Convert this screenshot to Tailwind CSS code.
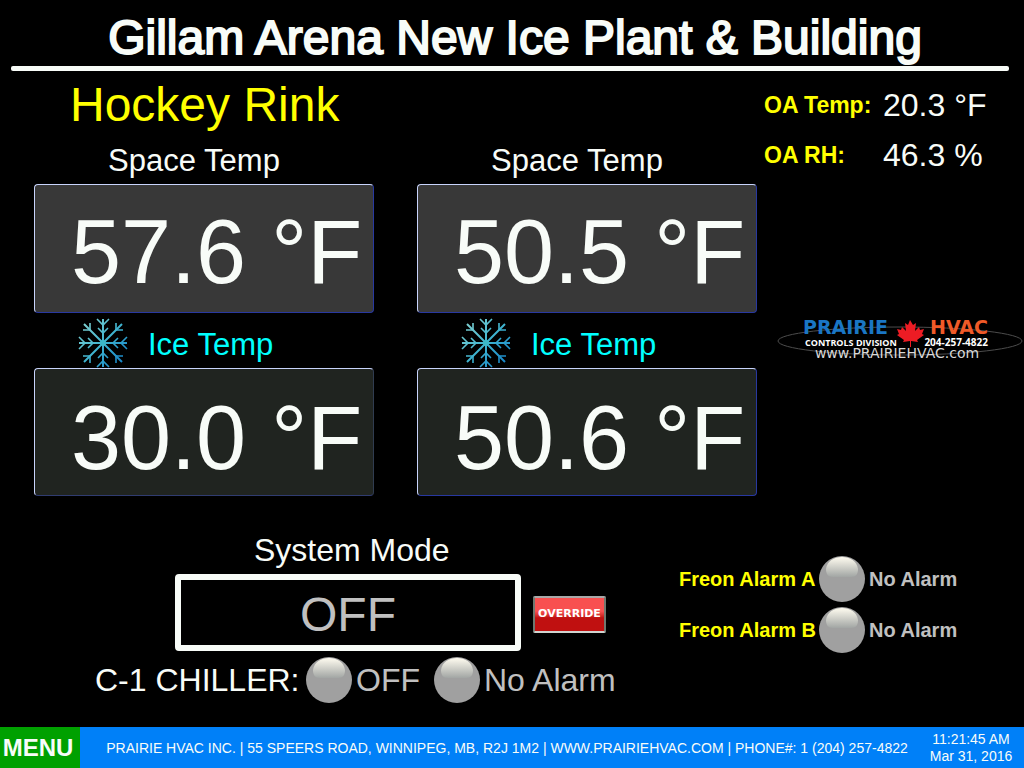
<!DOCTYPE html>
<html lang="en">
<head>
<meta charset="utf-8">
<meta name="viewport" content="width=device-width, initial-scale=1">
<title>Gillam Arena New Ice Plant &amp; Building</title>
<script src="https://cdn.jsdelivr.net/npm/@tailwindcss/browser@4"></script>
</head>
<body class="flex min-h-screen flex-col bg-black font-['Liberation_Sans',Arial,sans-serif] text-[#f8fcf8]">

<!-- Shared drawings -->
<svg class="absolute size-0" aria-hidden="true">
  <defs>
    <linearGradient id="frost" gradientUnits="userSpaceOnUse" x1="-20" y1="-20" x2="20" y2="20">
      <stop offset="0" stop-color="#7fd0d0"/><stop offset=".5" stop-color="#3fb4d0"/><stop offset="1" stop-color="#1583c8"/>
    </linearGradient>
    <linearGradient id="gloss" x1="0" y1="0" x2="0" y2="1">
      <stop offset="0" stop-color="#fffcf0"/><stop offset="1" stop-color="#a2a6a4"/>
    </linearGradient>
  </defs>
  <symbol id="snowflake" viewBox="-25 -25 50 50">
    <g fill="none" stroke="url(#frost)" stroke-width="1.6">
      <path d="M0 -24V24M-24 0H24M-19 -19L19 19M19 -19L-19 19" stroke-width="2"/>
      <path d="M-6 -24L0 -18L6 -24M-5 -15L0 -10L5 -15M-6 24L0 18L6 24M-5 15L0 10L5 15"/>
      <path d="M-24 -6L-18 0L-24 6M-15 -5L-10 0L-15 5M24 -6L18 0L24 6M15 -5L10 0L15 5"/>
      <path d="M-20 -13H-13V-20M20 -13H13V-20M-20 13H-13V20M20 13H13V20"/>
    </g>
    <circle r="3" fill="#3db8c8"/>
  </symbol>
  <symbol id="lamp" viewBox="0 0 46 46">
    <circle cx="23" cy="23" r="23" fill="#a0a0a0"/>
    <path d="M7 13C8 5 15 1 23 1S38 5 39 13C39 18 37 21 32 21H14C9 21 7 18 7 13Z" fill="url(#gloss)"/>
  </symbol>
</svg>

<header class="pt-[10px] pr-[15px] pl-[11px]">
  <h1 class="pl-[10px] text-center text-[48px] leading-[56px] [-webkit-text-stroke:2px_#f8fcf8]">Gillam Arena New Ice Plant &amp; Building</h1>
  <div class="h-[5px] rounded-xs bg-[#f8fcf8]"></div>
</header>

<main class="flex-1 pt-[6px]">
  <div class="grid grid-cols-[757fr_267fr]">
    <section class="pl-[34px]">
      <h2 class="pl-[36px] text-[48px] leading-[56px] text-[#ffff00]">Hockey Rink</h2>
      <div class="mt-2 grid grid-cols-2 gap-[43px]">
        <div>
          <h3 class="h-[43px] pr-5 text-center text-[31px] leading-10">Space Temp</h3>
          <div class="h-[129px] rounded-[4px] border border-t-[#c8d4fc] border-r-[#2838a0] border-b-[#2838a0] border-l-[#c8d4fc] bg-[#383838] pt-1 pl-[36px] text-[90px] leading-[126px] whitespace-nowrap">57.6 °F</div>
          <div class="flex h-[55px] items-end pl-[44px] text-[#00ffff]">
            <svg class="size-[50px]" aria-hidden="true"><use href="#snowflake"/></svg>
            <h3 class="pl-5 text-[31px] leading-[46px]">Ice Temp</h3>
          </div>
          <div class="h-[128px] rounded-[4px] border border-t-[#c8d4fc] border-r-[#303c50] border-b-[#303c70] border-l-[#c8d4fc] bg-[#202420] pt-1.5 pl-[36px] text-[90px] leading-[126px] whitespace-nowrap">30.0 °F</div>
        </div>
        <div>
          <h3 class="h-[43px] pr-5 text-center text-[31px] leading-10">Space Temp</h3>
          <div class="h-[129px] rounded-[4px] border border-t-[#c8d4fc] border-r-[#2838a0] border-b-[#2838a0] border-l-[#c8d4fc] bg-[#383838] pt-1 pl-[36px] text-[90px] leading-[126px] whitespace-nowrap">50.5 °F</div>
          <div class="flex h-[55px] items-end pl-[44px] text-[#00ffff]">
            <svg class="size-[50px]" aria-hidden="true"><use href="#snowflake"/></svg>
            <h3 class="pl-5 text-[31px] leading-[46px]">Ice Temp</h3>
          </div>
          <div class="h-[128px] rounded-[4px] border border-t-[#c8d4fc] border-r-[#2838a0] border-b-[#2838a0] border-l-[#c8d4fc] bg-[#202420] pt-1.5 pl-[36px] text-[90px] leading-[126px] whitespace-nowrap">50.6 °F</div>
        </div>
      </div>
    </section>

    <aside>
      <dl class="grid grid-cols-[119px_1fr] gap-y-[10px] pt-2 pl-[7px] text-[32px] leading-10 whitespace-nowrap">
        <dt class="text-[23px] font-bold text-[#ffff00]">OA Temp:</dt><dd>20.3 °F</dd>
        <dt class="text-[23px] font-bold text-[#ffff00]">OA RH:</dt><dd>46.3 %</dd>
      </dl>
      <svg class="mt-[140px] ml-5 h-[50px] w-[246px]" viewBox="777 315 246 50" role="img" aria-label="Prairie HVAC Controls Division">
        <ellipse cx="900" cy="341" rx="122" ry="14" fill="none" stroke="#4c4c4c"/>
        <g fill="#fff">
          <text x="803" y="334" font-family="DejaVu Sans" font-weight="700" font-size="19" fill="#1a76c4">PRAIRIE</text>
          <text x="988" y="334" text-anchor="end" font-family="DejaVu Sans" font-weight="700" font-size="19" fill="#f05a28">HVAC</text>
          <text x="805" y="346" font-family="Open Sans" font-weight="700" font-size="9">CONTROLS DIVISION</text>
          <text x="988" y="346" text-anchor="end" font-family="Open Sans" font-weight="700" font-size="10">204-257-4822</text>
          <text x="897" y="358" text-anchor="middle" font-family="DejaVu Sans" font-size="14" fill="#d8d8d8">www.PRAIRIEHVAC.com</text>
        </g>
        <path fill="#ed1c24" d="M910 320L913 325L916 323L915 331L919 327L920 330L924 329L922 334L924 335L917 340L918 342L911 341V347H910V341L903 342L904 340L897 335L899 334L897 329L901 330L902 327L906 331L905 323L908 325Z"/>
      </svg>
    </aside>
  </div>

  <div class="mt-[34px] grid grid-cols-[679fr_345fr]">
    <section class="pl-[95px]">
      <h3 class="pl-[159px] text-[32px] leading-10">System Mode</h3>
      <div class="mt-1 flex items-center gap-3 pl-[80px]">
        <button type="button" class="h-[77px] w-[346px] rounded-[4px] border-6 border-[#f8fcf8] pt-1 text-[48px] leading-none text-[#c0c0c0]">OFF</button>
        <button type="button" class="mt-1 flex h-[37px] w-[73px] items-center justify-center rounded-[2px] border-2 border-t-[#a8a8a8] border-r-[#707870] border-b-[#d0d4d0] border-l-[#707870] bg-linear-to-b from-[#f85050] from-40% to-[#c01010] to-60% font-['DejaVu_Sans',sans-serif] text-[11px] font-bold text-white">OVERRIDE</button>
      </div>
      <div class="mt-1.5 flex items-center text-[32px] leading-[46px] whitespace-nowrap text-[#c0c0c0]">
        <span class="w-[211px] text-[#f8fcf8]">C-1 CHILLER:</span>
        <svg class="size-[46px]" aria-hidden="true"><use href="#lamp"/></svg>
        <span class="w-[82px] pl-1">OFF</span>
        <svg class="size-[46px]" aria-hidden="true"><use href="#lamp"/></svg>
        <span class="pl-1">No Alarm</span>
      </div>
    </section>
    <section class="flex flex-col gap-[5px] pt-[26px] text-[20px] leading-[46px] font-bold whitespace-nowrap">
      <div class="flex items-center">
        <span class="w-[140px] text-[#ffff00]">Freon Alarm A</span>
        <svg class="size-[46px]" aria-hidden="true"><use href="#lamp"/></svg>
        <span class="pl-1 text-[#c0c0c0]">No Alarm</span>
      </div>
      <div class="flex items-center">
        <span class="w-[140px] text-[#ffff00]">Freon Alarm B</span>
        <svg class="size-[46px]" aria-hidden="true"><use href="#lamp"/></svg>
        <span class="pl-1 text-[#c0c0c0]">No Alarm</span>
      </div>
    </section>
  </div>
</main>

<footer class="flex h-[41px] items-stretch bg-[#0080f8] whitespace-nowrap">
  <button type="button" class="w-20 bg-[#00a000] pr-1 text-[24px] font-bold">MENU</button>
  <p class="flex-1 pl-4 text-center text-[14px] leading-[42px]">PRAIRIE HVAC INC. | 55 SPEERS ROAD, WINNIPEG, MB, R2J 1M2 | WWW.PRAIRIEHVAC.COM | PHONE#: 1 (204) 257-4822</p>
  <div class="w-[106px] pt-1 text-center text-[14px] leading-[17px]"><p>11:21:45 AM</p><p>Mar 31, 2016</p></div>
</footer>
</body>
</html>
